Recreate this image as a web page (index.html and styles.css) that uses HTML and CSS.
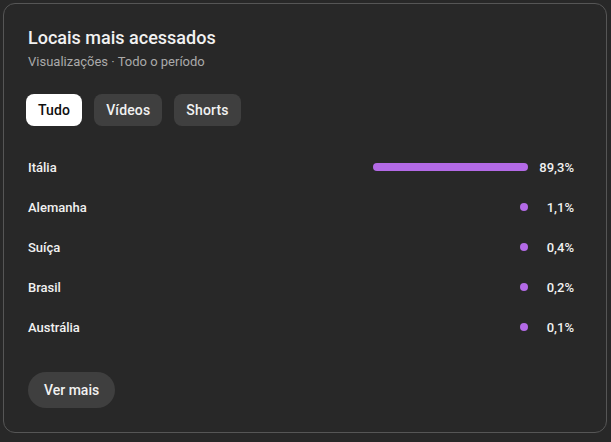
FILE: index.html
```html
<!DOCTYPE html>
<html lang="pt">
<head>
<meta charset="utf-8">
<link rel="stylesheet" href="styles.css">
</head>
<body>
<section class="card">
  <header class="head">
    <h1 class="title">Locais mais acessados</h1>
    <p class="sub">Visualizações · Todo o período</p>
  </header>
  <div class="tabs">
    <button class="tab active">Tudo</button>
    <button class="tab">Vídeos</button>
    <button class="tab">Shorts</button>
  </div>
  <ul class="rows">
    <li class="row"><span class="name">Itália</span><span class="track"><span class="bar" style="width:89.3%"></span></span><span class="pct">89,3%</span></li>
    <li class="row"><span class="name">Alemanha</span><span class="track"><span class="bar dot"></span></span><span class="pct">1,1%</span></li>
    <li class="row"><span class="name">Suíça</span><span class="track"><span class="bar dot"></span></span><span class="pct">0,4%</span></li>
    <li class="row"><span class="name">Brasil</span><span class="track"><span class="bar dot"></span></span><span class="pct">0,2%</span></li>
    <li class="row"><span class="name">Austrália</span><span class="track"><span class="bar dot"></span></span><span class="pct">0,1%</span></li>
  </ul>
  <button class="more">Ver mais</button>
</section>
</body>
</html>
```
FILE: styles.css
```css
html, body {
  margin: 0;
  padding: 0;
  background: #282828;
}
body {
  padding: 3px;
  font-family: Roboto, "Noto Sans", sans-serif;
  color: #f1f1f1;
}
.card {
  box-sizing: border-box;
  width: 604px;
  height: 430px;
  border: 1px solid #565656;
  border-radius: 12px;
  padding: 22px 32px 0 24px;
  display: flex;
  flex-direction: column;
  align-items: flex-start;
}
.head { display: flex; flex-direction: column; }
.title {
  margin: 0;
  font-size: 18px;
  line-height: 24px;
  font-weight: 500;
  color: #f1f1f1;
}
.sub {
  margin: 3px 0 0;
  font-size: 13px;
  line-height: 18px;
  color: #aaaaaa;
}
.tabs {
  display: flex;
  gap: 12px;
  margin-top: 23px;
  margin-left: -2px;
}
.tab {
  height: 32px;
  padding: 0 12px;
  border: 0;
  border-radius: 8px;
  background: #3f3f3f;
  color: #f1f1f1;
  font-family: inherit;
  font-size: 14px;
  font-weight: 500;
  letter-spacing: 0.15px;
}
.tab.active {
  background: #ffffff;
  color: #0f0f0f;
}
.rows {
  list-style: none;
  margin: 21px 0 0;
  padding: 0;
  align-self: stretch;
}
.row {
  height: 40px;
  display: flex;
  align-items: center;
  font-size: 13px;
  font-weight: 500;
}
.name { flex: 1; }
.track {
  width: 174px;
  height: 8px;
  display: flex;
  justify-content: flex-end;
}
.bar {
  height: 8px;
  min-width: 8px;
  border-radius: 4px;
  background: #b36ae6;
}
.pct {
  width: 46px;
  text-align: right;
}
.more {
  margin-top: 25px;
  height: 36px;
  padding: 0 16px;
  border: 0;
  border-radius: 18px;
  background: #3f3f3f;
  color: #f1f1f1;
  font-family: inherit;
  font-size: 14px;
  font-weight: 500;
}
```
